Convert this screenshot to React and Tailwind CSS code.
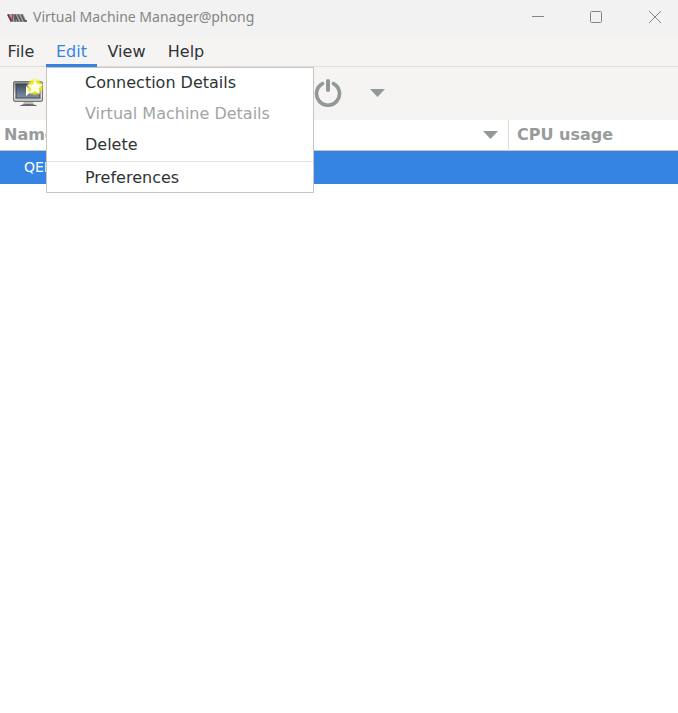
import React from "react";

function AppLogo() {
  return (
    <svg className="h-3 w-5 shrink-0" viewBox="0 0 20 12" aria-hidden="true">
      <path d="M0 2h16l4 8H4Z" fill="#a3a1a2" />
      <path d="m1 2.5 3.5 7" fill="none" stroke="#7d3348" strokeWidth="1.8" />
      <path d="m5 9 1-7" fill="none" stroke="#8d4257" strokeWidth="1.3" />
      <path d="m8 9.5 0-7 3 7M11 2.5l3.5 7M14.5 2.5l3 6.5H20" fill="none" stroke="#555" strokeWidth="1.5" />
    </svg>
  );
}

function NewMachineIcon() {
  return (
    <svg className="h-8 w-8" viewBox="0 0 32 32" aria-hidden="true">
      <defs>
        <linearGradient id="screen" x2="0" y2="1">
          <stop stopColor="#3e4b60" />
          <stop offset="1" stopColor="#8290a1" />
        </linearGradient>
        <linearGradient id="bezel" x2="0" y2="1">
          <stop stopColor="#8b8c89" />
          <stop offset=".7" stopColor="#eeeeec" />
          <stop offset="1" stopColor="#b4b5b2" />
        </linearGradient>
        <radialGradient id="glow">
          <stop offset=".65" stopColor="#ebe823" />
          <stop offset="1" stopColor="#f4f21a" stopOpacity="0" />
        </radialGradient>
      </defs>
      <path d="M12 25h9l1 3H11Z" fill="#bbb" />
      <path d="M8 29c0-1 3-2 8-2s9 1 9 2Z" fill="#666863" />
      <rect x="1.5" y="4.5" width="29" height="20" rx="1.5" fill="url(#bezel)" stroke="#73756f" />
      <rect x="4" y="7" width="24" height="14" fill="url(#screen)" stroke="#3c4656" />
      <path d="M14 9v10l6-5Z" fill="#fff" />
      <circle cx="23" cy="10" r="9" fill="url(#glow)" />
      <path d="m23 2 2 5 6 .5-4.6 3.8 1.3 5.7-4.7-3-5 3 1.3-5.7L15 8l6-.5Z" fill="#fffff0" />
    </svg>
  );
}

function DownArrow() {
  return (
    <svg className="h-2 w-4" viewBox="0 0 16 8" aria-hidden="true">
      <path d="M1 0h15L8.5 8Z" fill="#929797" />
    </svg>
  );
}

function WindowControls() {
  return (
    <div className="flex h-full">
      <button aria-label="Minimize" className="flex w-14 items-center justify-center pb-0.5">
        <svg className="h-3 w-3" viewBox="0 0 12 12"><path d="M0 5.5h12" stroke="#858585" /></svg>
      </button>
      <button aria-label="Maximize" className="flex w-15 items-center justify-center pb-0.5">
        <svg className="h-3 w-3" viewBox="0 0 12 12"><rect x=".5" y=".5" width="11" height="11" rx="1" fill="none" stroke="#858585" /></svg>
      </button>
      <button aria-label="Close" className="flex w-13 items-center justify-end pr-[17px] pb-0.5">
        <svg className="h-3 w-3" viewBox="0 0 12 12"><path d="m0 0 12 12M12 0 0 12" stroke="#858585" /></svg>
      </button>
    </div>
  );
}

function EditMenu() {
  const item = "flex h-[31px] w-full items-center pl-[38px] pb-0.5 text-left";
  return (
    <div role="menu" className="absolute top-full left-0 z-10 w-[268px] border border-[#c8c4c0] bg-white text-[#2e3436]">
      <button role="menuitem" className={item}>Connection Details</button>
      <button role="menuitem" disabled className={`${item} text-[#a1a5a5]`}>Virtual Machine Details</button>
      <button role="menuitem" className={item}>Delete</button>
      <hr className="border-[#e4e3e2]" />
      <button role="menuitem" className="flex h-[30px] w-full items-center pt-0.5 pl-[38px] text-left">Preferences</button>
    </div>
  );
}

export default function App() {
  return (
    <main className="min-h-screen bg-white font-['DejaVu_Sans',sans-serif] text-base text-[#2e3436]">
      <header className="flex h-9 items-center bg-[#f2f2f2] pl-[7px]">
        <AppLogo />
        <h1 className="ml-1.5 flex-1 whitespace-nowrap pb-0.5 font-['Noto_Sans',sans-serif] text-sm text-[#858585]">Virtual Machine Manager@phong</h1>
        <WindowControls />
      </header>
      <nav aria-label="Main menu" className="flex h-[31px] border-b border-[#dedddb] bg-[#f5f4f3]">
        <button className="w-[46px] pt-0.5 pr-1">File</button>
        <div className="relative h-[31px] w-[51px]">
          <button aria-haspopup="menu" aria-expanded="true" className="h-full w-full border-b-[3px] border-[#3584e4] pt-[3px] text-[#3584e4]">Edit</button>
          <EditMenu />
        </div>
        <button className="w-[59px] pt-0.5">View</button>
        <button className="w-[60px] pt-0.5">Help</button>
      </nav>
      <div role="toolbar" aria-label="Virtual machine actions" className="flex h-[53px] items-center bg-[#f5f4f2] pb-0.5 pl-3">
        <button aria-label="New virtual machine"><NewMachineIcon /></button>
        <button aria-label="Shut down" className="ml-[270px]">
          <svg className="h-7 w-7" viewBox="0 0 28 28" fill="none" stroke="#929797" strokeLinecap="round" aria-hidden="true">
            <path d="M8.5 4.6a11.5 11.5 0 1 0 11 0" strokeWidth="3.6" />
            <path d="M14 2v9" strokeWidth="4" />
          </svg>
        </button>
        <button aria-label="Shutdown options" className="ml-[27px]"><DownArrow /></button>
      </div>
      <table className="w-full table-fixed border-collapse text-left">
        <colgroup><col className="w-3/4" /><col className="w-1/4" /></colgroup>
        <thead>
          <tr className="h-[30px] border-b border-[#c8c4c0] text-[#979b9b]">
            <th scope="col" className="border-r border-[#dedddb] py-0 pr-2.5 pl-1">
              <div className="flex items-center justify-between"><span>Name</span><DownArrow /></div>
            </th>
            <th scope="col" className="py-0 pl-2">CPU usage</th>
          </tr>
        </thead>
        <tbody>
          <tr className="h-[34px] bg-[#3584e4] text-white">
            <td className="py-0 pl-6 text-sm">QEM</td>
            <td className="p-0" />
          </tr>
        </tbody>
      </table>
    </main>
  );
}
